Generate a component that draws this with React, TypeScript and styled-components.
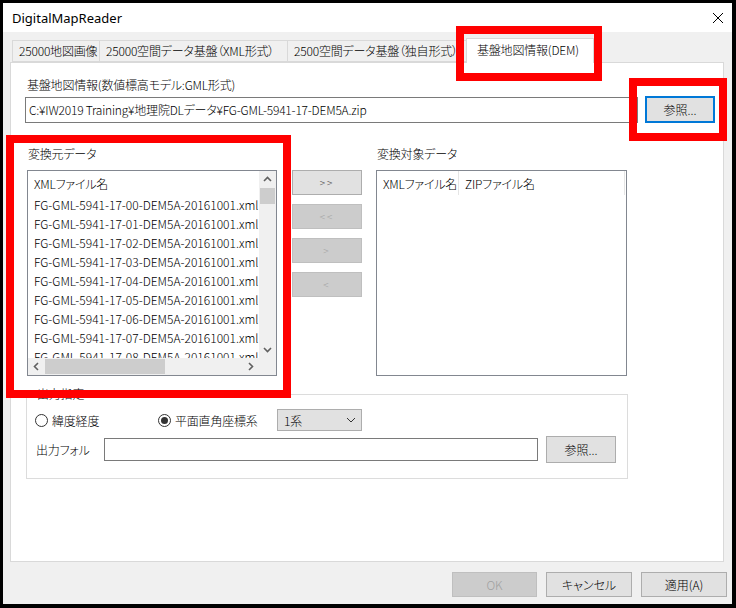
import React from 'react';
import styled, { createGlobalStyle } from 'styled-components';

const GlobalStyle = createGlobalStyle`
  html, body {
    margin: 0;
    padding: 0;
    background: #000;
  }
  body {
    font-family: "Noto Sans CJK JP", "Noto Sans", sans-serif;
    font-size: 12px;
    font-weight: 300;
    font-feature-settings: "palt";
    letter-spacing: -0.2px;
    color: #000;
  }
  * {
    box-sizing: border-box;
  }
`;

const sourceFiles = Array.from(
  { length: 9 },
  (_, i) => `FG-GML-5941-17-0${i}-DEM5A-20161001.xml`,
);

type Dir = 'up' | 'down' | 'left' | 'right';

const rotation: Record<Dir, number> = { up: 0, right: 90, down: 180, left: 270 };

const Chevron: React.FC<{ dir: Dir }> = ({ dir }) => (
  <svg
    width="9"
    height="9"
    viewBox="0 0 9 9"
    style={{ transform: `rotate(${rotation[dir]}deg)` }}
  >
    <path d="M1 6 L4.5 2.5 L8 6" fill="none" stroke="#606060" strokeWidth="1.6" />
  </svg>
);

export default function App() {
  return (
    <Screen>
      <GlobalStyle />
      <Window>
        <TitleBar>
          <span>DigitalMapReader</span>
          <svg width="10" height="10" viewBox="0 0 10 10">
            <path d="M0 0 L10 10 M10 0 L0 10" stroke="#000" strokeWidth="1" />
          </svg>
        </TitleBar>

        <Body>
          <Tabs>
            <Tab $w={88}>25000地図画像</Tab>
            <Tab $w={189}>25000空間データ基盤（XML形式）</Tab>
            <Tab $w={182}>2500空間データ基盤（独自形式）</Tab>
            <Tab $w={128} $active>
              基盤地図情報(DEM)
            </Tab>
          </Tabs>

          <Panel>
            <FieldLabel>基盤地図情報(数値標高モデル:GML形式)</FieldLabel>
            <PathRow>
              <TextBox $w={613} $h={26}>
                C:¥IW2019 Training¥地理院DLデータ¥FG-GML-5941-17-DEM5A.zip
              </TextBox>
              <Button $w={70} $h={27} $focused>
                参照...
              </Button>
            </PathRow>

            <Columns>
              <Column $w={250}>
                <ColumnLabel>変換元データ</ColumnLabel>
                <ListBox>
                  <ListContent>
                    <ListHeader>XMLファイル名</ListHeader>
                    {sourceFiles.map((f) => (
                      <ListRow key={f}>{f}</ListRow>
                    ))}
                  </ListContent>
                  <VScroll>
                    <ArrowCell>
                      <Chevron dir="up" />
                    </ArrowCell>
                    <VThumb />
                    <Spacer />
                    <ArrowCell>
                      <Chevron dir="down" />
                    </ArrowCell>
                  </VScroll>
                  <HScroll>
                    <ArrowCell>
                      <Chevron dir="left" />
                    </ArrowCell>
                    <HThumb />
                    <Spacer />
                    <ArrowCell>
                      <Chevron dir="right" />
                    </ArrowCell>
                  </HScroll>
                  <Corner />
                </ListBox>
              </Column>

              <MoveButtons>
                <Button $w={70} $h={25} $small>
                  &gt;&gt;
                </Button>
                <Button $w={70} $h={25} $small $disabled>
                  &lt;&lt;
                </Button>
                <Button $w={70} $h={25} $small $disabled>
                  &gt;
                </Button>
                <Button $w={70} $h={25} $small $disabled>
                  &lt;
                </Button>
              </MoveButtons>

              <Column $w={251}>
                <ColumnLabel>変換対象データ</ColumnLabel>
                <ListBox $plain>
                  <ListContent>
                    <ListHeader>
                      <HeaderCell $w={82}>XMLファイル名</HeaderCell>
                      <HeaderCell $w={166}>ZIPファイル名</HeaderCell>
                    </ListHeader>
                  </ListContent>
                </ListBox>
              </Column>
            </Columns>

            <GroupBox>
              <Legend>出力指定</Legend>
              <GroupRow>
                <RadioItem $w={123}>
                  <RadioCircle />
                  緯度経度
                </RadioItem>
                <RadioItem $w={119}>
                  <RadioCircle $checked />
                  平面直角座標系
                </RadioItem>
                <Select>
                  <span>1系</span>
                  <svg width="10" height="6" viewBox="0 0 10 6">
                    <path d="M1 1 L5 5 L9 1" fill="none" stroke="#333" strokeWidth="1" />
                  </svg>
                </Select>
              </GroupRow>
              <GroupRow $gap>
                <RowLabel>出力フォル</RowLabel>
                <TextBox $w={434} $h={23} />
                <Button $w={70} $h={27}>
                  参照...
                </Button>
              </GroupRow>
            </GroupBox>
          </Panel>

          <Footer>
            <Button $w={85} $h={25} $disabled>
              OK
            </Button>
            <Button $w={86} $h={25}>
              キャンセル
            </Button>
            <Button $w={86} $h={25}>
              適用(A)
            </Button>
          </Footer>
        </Body>
      </Window>

      <Highlight $x={456} $y={26} $w={146} $h={55} />
      <Highlight $x={629} $y={78} $w={98} $h={63} />
      <Highlight $x={6} $y={135} $w={285} $h={263} />
    </Screen>
  );
}

const Screen = styled.div`
  position: relative;
  width: 736px;
  height: 608px;
  padding: 3px 4px 4px 3px;
  background: #000;
  overflow: hidden;
`;

const Window = styled.div`
  display: flex;
  flex-direction: column;
  height: 100%;
  background: #f0f0f0;
`;

const TitleBar = styled.div`
  display: flex;
  align-items: center;
  justify-content: space-between;
  height: 29px;
  padding: 0 9px 0 9px;
  background: #fff;
  font-family: "Noto Sans", sans-serif;
  font-size: 13px;
  font-weight: 400;
  letter-spacing: 0;
`;

const Body = styled.div`
  flex: 1;
  display: flex;
  flex-direction: column;
  padding: 6px 8px 7px 7px;
`;

const Tabs = styled.div`
  display: flex;
  align-items: flex-end;
  height: 24px;
  padding-left: 2px;
`;

const Tab = styled.div<{ $w: number; $active?: boolean }>`
  position: relative;
  width: ${(p) => p.$w}px;
  height: ${(p) => (p.$active ? 25 : 22)}px;
  margin-left: ${(p) => (p.$active ? -3 : -1)}px;
  margin-bottom: ${(p) => (p.$active ? -1 : 0)}px;
  padding: ${(p) => (p.$active ? '3px 0 0 10px' : '2px 0 0 6px')};
  border: 1px solid #d9d9d9;
  border-bottom: ${(p) => (p.$active ? 'none' : '1px solid #d9d9d9')};
  background: ${(p) => (p.$active ? '#fff' : '#f0f0f0')};
  z-index: ${(p) => (p.$active ? 1 : 0)};
  white-space: nowrap;
  overflow: hidden;
  line-height: 16px;

  &:first-child {
    margin-left: 0;
  }
`;

const Panel = styled.div`
  height: 500px;
  padding: 14px 0 0 14px;
  background: #fff;
  border: 1px solid #d9d9d9;
`;

const FieldLabel = styled.div`
  padding-left: 2px;
  line-height: 16px;
`;

const PathRow = styled.div`
  display: flex;
  align-items: center;
  gap: 7px;
  margin-top: 3px;
`;

const TextBox = styled.div<{ $w: number; $h: number }>`
  width: ${(p) => p.$w}px;
  height: ${(p) => p.$h}px;
  padding: 0 3px;
  border: 1px solid #7a7a7a;
  background: #fff;
  line-height: ${(p) => p.$h - 2}px;
  white-space: nowrap;
  overflow: hidden;
`;

const Button = styled.div<{
  $w: number;
  $h: number;
  $disabled?: boolean;
  $focused?: boolean;
  $small?: boolean;
}>`
  display: flex;
  align-items: center;
  justify-content: center;
  flex-shrink: 0;
  width: ${(p) => p.$w}px;
  height: ${(p) => p.$h}px;
  border: ${(p) =>
    p.$focused
      ? '2px solid #0078d7'
      : p.$disabled
        ? '1px solid #bfbfbf'
        : '1px solid #adadad'};
  background: ${(p) => (p.$disabled ? '#cccccc' : '#e1e1e1')};
  color: ${(p) => (p.$disabled ? '#a0a0a0' : p.$small ? '#333' : '#000')};
  font-size: ${(p) => (p.$small ? 10 : 12)}px;
  letter-spacing: ${(p) => (p.$small ? 2 : 0)}px;
`;

const Columns = styled.div`
  display: flex;
  margin-top: 23px;
  padding-left: 2px;
`;

const Column = styled.div<{ $w: number }>`
  display: flex;
  flex-direction: column;
  width: ${(p) => p.$w}px;
`;

const ColumnLabel = styled.div`
  padding-left: 1px;
  margin-bottom: 8px;
  line-height: 16px;
`;

const MoveButtons = styled.div`
  display: flex;
  flex-direction: column;
  gap: 9px;
  margin: 24px 14px 0 15px;
`;

const ListBox = styled.div<{ $plain?: boolean }>`
  display: grid;
  grid-template-columns: ${(p) => (p.$plain ? '1fr' : '1fr 17px')};
  grid-template-rows: ${(p) => (p.$plain ? '1fr' : '1fr 17px')};
  height: 206px;
  border: 1px solid #828790;
  background: #fff;
`;

const ListContent = styled.div`
  overflow: hidden;
  min-width: 0;
`;

const ListHeader = styled.div`
  display: flex;
  align-items: center;
  height: 24px;
  padding-left: 6px;
  white-space: nowrap;
`;

const HeaderCell = styled.div<{ $w: number }>`
  display: flex;
  align-items: center;
  width: ${(p) => p.$w}px;
  height: 24px;
  margin-left: -6px;
  padding-left: 6px;
  border-right: 1px solid #e5e5e5;
  overflow: hidden;

  & + & {
    margin-left: 0;
  }
`;

const ListRow = styled.div`
  height: 19px;
  padding-left: 6px;
  line-height: 19px;
  white-space: nowrap;
  letter-spacing: 0;
`;

const VScroll = styled.div`
  display: flex;
  flex-direction: column;
  background: #f0f0f0;
`;

const HScroll = styled.div`
  display: flex;
  background: #f0f0f0;
`;

const ArrowCell = styled.div`
  display: flex;
  align-items: center;
  justify-content: center;
  width: 17px;
  height: 17px;
  flex-shrink: 0;
`;

const VThumb = styled.div`
  height: 16px;
  margin: 0 1px;
  background: #cdcdcd;
`;

const HThumb = styled.div`
  width: 120px;
  margin: 1px 0;
  background: #cdcdcd;
`;

const Spacer = styled.div`
  flex: 1;
`;

const Corner = styled.div`
  background: #f0f0f0;
`;

const GroupBox = styled.div`
  position: relative;
  width: 602px;
  margin: 18px 0 0 1px;
  padding: 14px 10px 15px 8px;
  border: 1px solid #dcdcdc;
`;

const Legend = styled.div`
  position: absolute;
  top: -9px;
  left: 9px;
  padding: 0 1px;
  background: #fff;
  line-height: 16px;
`;

const GroupRow = styled.div<{ $gap?: boolean }>`
  display: flex;
  align-items: center;
  margin-top: ${(p) => (p.$gap ? 5 : 0)}px;
  gap: ${(p) => (p.$gap ? 8 : 0)}px;
  height: ${(p) => (p.$gap ? 27 : 22)}px;
`;

const RadioItem = styled.div<{ $w: number }>`
  display: flex;
  align-items: center;
  gap: 4px;
  width: ${(p) => p.$w}px;
`;

const RadioCircle = styled.span<{ $checked?: boolean }>`
  display: flex;
  align-items: center;
  justify-content: center;
  width: 13px;
  height: 13px;
  border: 1px solid #333;
  border-radius: 50%;
  background: #fff;

  &::after {
    content: '';
    display: ${(p) => (p.$checked ? 'block' : 'none')};
    width: 7px;
    height: 7px;
    border-radius: 50%;
    background: #333;
  }
`;

const Select = styled.div`
  display: flex;
  align-items: center;
  justify-content: space-between;
  width: 85px;
  height: 22px;
  padding: 0 5px 0 6px;
  border: 1px solid #adadad;
  background: #e1e1e1;
`;

const RowLabel = styled.div`
  width: 61px;
  padding-left: 1px;
`;

const Footer = styled.div`
  display: flex;
  justify-content: flex-end;
  gap: 9px;
  margin: 10px -3px 0 0;
`;

const Highlight = styled.div<{ $x: number; $y: number; $w: number; $h: number }>`
  position: absolute;
  left: ${(p) => p.$x}px;
  top: ${(p) => p.$y}px;
  width: ${(p) => p.$w}px;
  height: ${(p) => p.$h}px;
  border: 8px solid #ff0000;
  pointer-events: none;
`;
